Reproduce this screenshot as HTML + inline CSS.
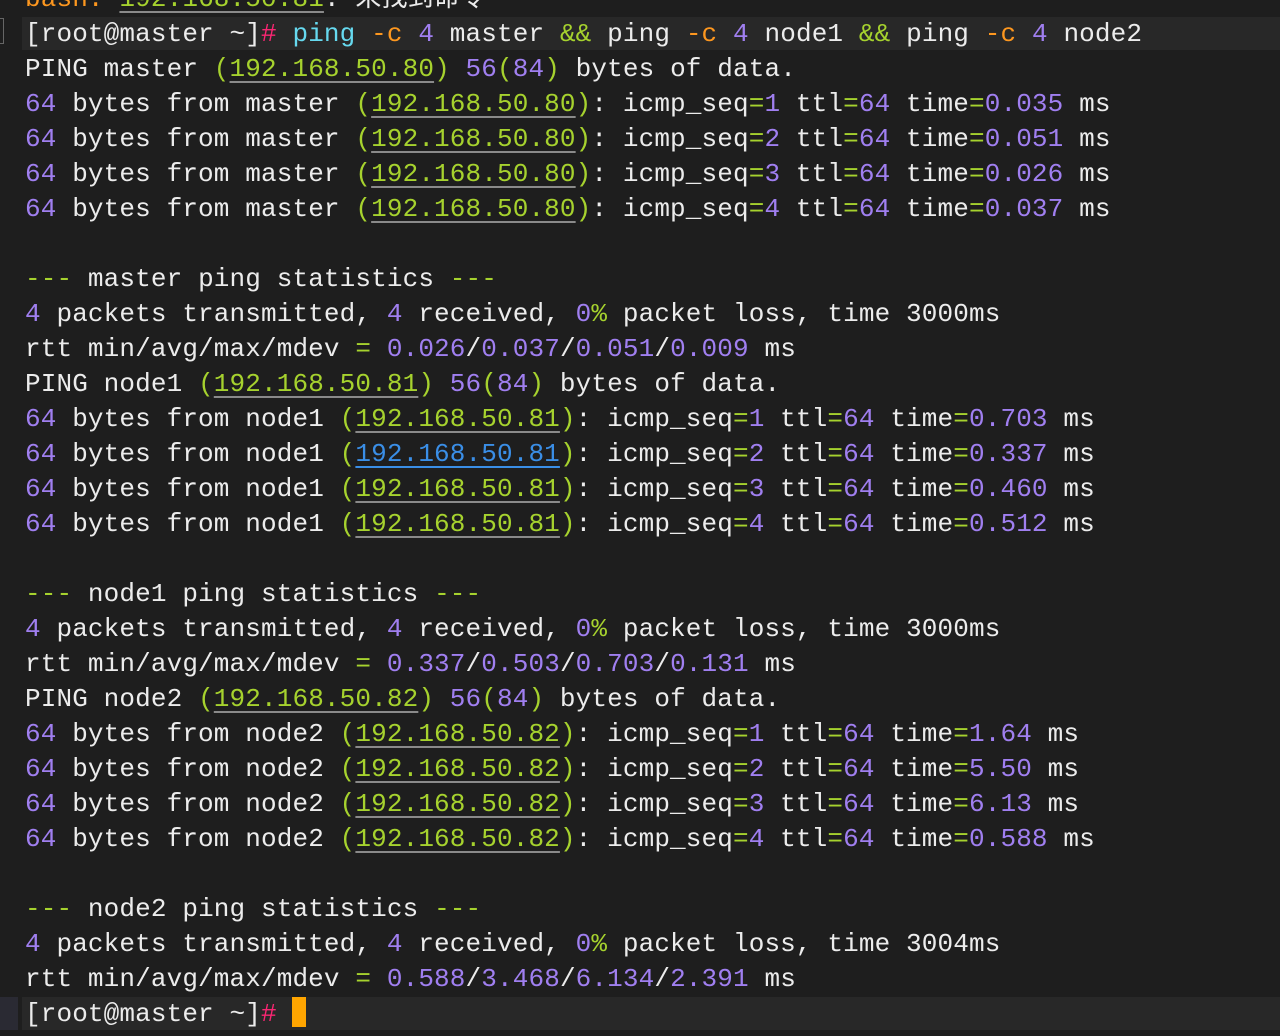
<!DOCTYPE html>
<html><head><meta charset="utf-8"><style>
html,body{margin:0;padding:0;background:#1e1e1e;width:1280px;height:1036px;overflow:hidden}
.t{position:absolute;left:25px;top:-18px;font-family:"Liberation Mono","Noto Sans CJK SC",monospace;font-size:26px;line-height:35px;color:#ececec;white-space:pre;letter-spacing:0.13px}
.band{position:absolute;left:22px;right:0;height:33px;background:#282828}
.g{color:#a6d22e}.p{color:#a07ff0}.o{color:#fd971f}.r{color:#f92672}.c{color:#66d9ef}
.u{color:#a6d22e;text-decoration:underline;text-decoration-color:#8a8a8a;text-underline-offset:5px;text-decoration-thickness:2px}
.b{color:#3a8ee6;text-decoration:underline;text-decoration-color:#3a8ee6;text-underline-offset:5px;text-decoration-thickness:2px}
.cur{display:inline-block;width:14px;height:30px;background:#ffa500;vertical-align:-6px}
</style></head><body>
<div class="band" style="top:17px"></div>
<div class="band" style="top:997px"></div>
<div style="position:absolute;left:0;top:18px;width:3px;height:24px;border:1px solid #666;border-left:none"></div>
<div style="position:absolute;left:0;top:997px;width:18px;height:33px;background:#2a2a33"></div>
<div class="t"><span class="o">bash:</span> <span class="u">192.168.50.81</span>: 未找到命令
[root@master ~]<span class="r">#</span> <span class="c">ping</span> <span class="o">-c</span> <span class="p">4</span> master <span class="g">&amp;&amp;</span> ping <span class="o">-c</span> <span class="p">4</span> node1 <span class="g">&amp;&amp;</span> ping <span class="o">-c</span> <span class="p">4</span> node2
PING master <span class="g">(</span><span class="u">192.168.50.80</span><span class="g">)</span> <span class="p">56</span><span class="g">(</span><span class="p">84</span><span class="g">)</span> bytes of data.
<span class="p">64</span> bytes from master <span class="g">(</span><span class="u">192.168.50.80</span><span class="g">)</span>: icmp_seq<span class="g">=</span><span class="p">1</span> ttl<span class="g">=</span><span class="p">64</span> time<span class="g">=</span><span class="p">0.035</span> ms
<span class="p">64</span> bytes from master <span class="g">(</span><span class="u">192.168.50.80</span><span class="g">)</span>: icmp_seq<span class="g">=</span><span class="p">2</span> ttl<span class="g">=</span><span class="p">64</span> time<span class="g">=</span><span class="p">0.051</span> ms
<span class="p">64</span> bytes from master <span class="g">(</span><span class="u">192.168.50.80</span><span class="g">)</span>: icmp_seq<span class="g">=</span><span class="p">3</span> ttl<span class="g">=</span><span class="p">64</span> time<span class="g">=</span><span class="p">0.026</span> ms
<span class="p">64</span> bytes from master <span class="g">(</span><span class="u">192.168.50.80</span><span class="g">)</span>: icmp_seq<span class="g">=</span><span class="p">4</span> ttl<span class="g">=</span><span class="p">64</span> time<span class="g">=</span><span class="p">0.037</span> ms

<span class="g">---</span> master ping statistics <span class="g">---</span>
<span class="p">4</span> packets transmitted, <span class="p">4</span> received, <span class="p">0</span><span class="g">%</span> packet loss, time 3000ms
rtt min/avg/max/mdev <span class="g">=</span> <span class="p">0.026</span>/<span class="p">0.037</span>/<span class="p">0.051</span>/<span class="p">0.009</span> ms
PING node1 <span class="g">(</span><span class="u">192.168.50.81</span><span class="g">)</span> <span class="p">56</span><span class="g">(</span><span class="p">84</span><span class="g">)</span> bytes of data.
<span class="p">64</span> bytes from node1 <span class="g">(</span><span class="u">192.168.50.81</span><span class="g">)</span>: icmp_seq<span class="g">=</span><span class="p">1</span> ttl<span class="g">=</span><span class="p">64</span> time<span class="g">=</span><span class="p">0.703</span> ms
<span class="p">64</span> bytes from node1 <span class="g">(</span><span class="b">192.168.50.81</span><span class="g">)</span>: icmp_seq<span class="g">=</span><span class="p">2</span> ttl<span class="g">=</span><span class="p">64</span> time<span class="g">=</span><span class="p">0.337</span> ms
<span class="p">64</span> bytes from node1 <span class="g">(</span><span class="u">192.168.50.81</span><span class="g">)</span>: icmp_seq<span class="g">=</span><span class="p">3</span> ttl<span class="g">=</span><span class="p">64</span> time<span class="g">=</span><span class="p">0.460</span> ms
<span class="p">64</span> bytes from node1 <span class="g">(</span><span class="u">192.168.50.81</span><span class="g">)</span>: icmp_seq<span class="g">=</span><span class="p">4</span> ttl<span class="g">=</span><span class="p">64</span> time<span class="g">=</span><span class="p">0.512</span> ms

<span class="g">---</span> node1 ping statistics <span class="g">---</span>
<span class="p">4</span> packets transmitted, <span class="p">4</span> received, <span class="p">0</span><span class="g">%</span> packet loss, time 3000ms
rtt min/avg/max/mdev <span class="g">=</span> <span class="p">0.337</span>/<span class="p">0.503</span>/<span class="p">0.703</span>/<span class="p">0.131</span> ms
PING node2 <span class="g">(</span><span class="u">192.168.50.82</span><span class="g">)</span> <span class="p">56</span><span class="g">(</span><span class="p">84</span><span class="g">)</span> bytes of data.
<span class="p">64</span> bytes from node2 <span class="g">(</span><span class="u">192.168.50.82</span><span class="g">)</span>: icmp_seq<span class="g">=</span><span class="p">1</span> ttl<span class="g">=</span><span class="p">64</span> time<span class="g">=</span><span class="p">1.64</span> ms
<span class="p">64</span> bytes from node2 <span class="g">(</span><span class="u">192.168.50.82</span><span class="g">)</span>: icmp_seq<span class="g">=</span><span class="p">2</span> ttl<span class="g">=</span><span class="p">64</span> time<span class="g">=</span><span class="p">5.50</span> ms
<span class="p">64</span> bytes from node2 <span class="g">(</span><span class="u">192.168.50.82</span><span class="g">)</span>: icmp_seq<span class="g">=</span><span class="p">3</span> ttl<span class="g">=</span><span class="p">64</span> time<span class="g">=</span><span class="p">6.13</span> ms
<span class="p">64</span> bytes from node2 <span class="g">(</span><span class="u">192.168.50.82</span><span class="g">)</span>: icmp_seq<span class="g">=</span><span class="p">4</span> ttl<span class="g">=</span><span class="p">64</span> time<span class="g">=</span><span class="p">0.588</span> ms

<span class="g">---</span> node2 ping statistics <span class="g">---</span>
<span class="p">4</span> packets transmitted, <span class="p">4</span> received, <span class="p">0</span><span class="g">%</span> packet loss, time 3004ms
rtt min/avg/max/mdev <span class="g">=</span> <span class="p">0.588</span>/<span class="p">3.468</span>/<span class="p">6.134</span>/<span class="p">2.391</span> ms
[root@master ~]<span class="r">#</span> <span class="cur"></span></div>
</body></html>
